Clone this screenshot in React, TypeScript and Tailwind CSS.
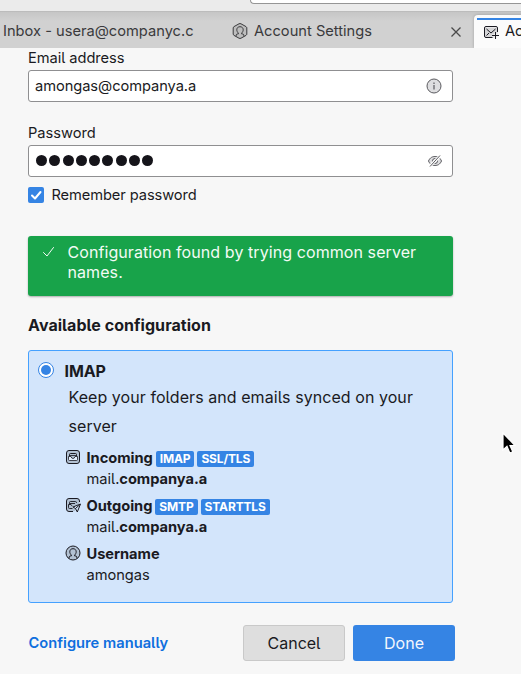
import React from "react";

function ProfileGlyph() {
  return (
    <g fill="none" stroke="currentColor" strokeWidth="1">
      <path d="M4.2 13.3v-1.1c0-.7.5-1.2 1.3-1.2h.8v-1C5.300 9 4.800 8 4.800 6.800 4.800 5 6 3.700 8 3.700s3.200 1.300 3.200 3.100c0 1.200-.5 2.200-1.500 3.200v1h.8c.8 0 1.300.5 1.300 1.200v1.100" />
    </g>
  );
}

function AccountIcon() {
  return (
    <svg width="16" height="16" viewBox="0 0 16 16" className="text-[#3a3a3c]">
      <path d="M7 .8Q8 .3 9 .8l5 2.800q.8.500.8 1.400v6q0 .9-.8 1.400l-5 2.800q-1 .5-2 0l-5-2.800q-.8-.5-.8-1.400V5q0-.9.800-1.400z" fill="#bdbdbd" stroke="currentColor" />
      <ProfileGlyph />
    </svg>
  );
}

function UserIcon() {
  return (
    <svg width="16" height="16" viewBox="0 0 16 16" className="text-[#1a1a22]">
      <circle cx="8" cy="8" r="7" fill="#b2c1d2" stroke="currentColor" />
      <ProfileGlyph />
    </svg>
  );
}

function NewMailIcon() {
  return (
    <svg width="16" height="16" viewBox="0 0 16 16" fill="none" stroke="#1a1a22">
      <rect x="1.500" y="3.500" width="13" height="10" rx="1.500" fill="#d5d5d7" stroke="none" />
      <path d="M9.500 13.500H3A1.500 1.500 0 0 1 1.500 12V4A1.500 1.500 0 0 1 3 2.500h10A1.500 1.500 0 0 1 14.500 4v4M3.500 5l4.500 4 4.500-4M3.500 11.500l2.500-2.500" />
      <path d="M12.500 8.500v7M9 11.500h7" stroke="#fbfbfb" strokeWidth="2" />
      <path d="M12.500 8v7M9 11.500h7" />
    </svg>
  );
}

function InboxIcon() {
  return (
    <svg width="16" height="16" viewBox="0 0 16 16" fill="none" stroke="#1a1a22">
      <rect x="1.500" y="1.500" width="13" height="13" rx="2.500" fill="#b2c1d2" />
      <path d="M4.500 7.500V5.500q0-1 1-1h5q1 0 1 1v2" />
      <path d="M5 6.500h6" strokeWidth=".8" />
      <path d="M3.500 7.500h2.500q.5 2 2 2t2-2h2.500v3q0 1-1 1h-7q-1 0-1-1z" fill="#e3effd" strokeWidth=".8" />
    </svg>
  );
}

function OutboxIcon() {
  return (
    <svg width="16" height="16" viewBox="0 0 16 16" fill="none" stroke="#1a1a22">
      <path d="M8 14.500H4A2.500 2.500 0 0 1 1.500 12V4A2.500 2.500 0 0 1 4 1.500h8A2.500 2.500 0 0 1 14.500 4v2L10 14z" fill="#b2c1d2" stroke="none" />
      <path d="M8 14.500H4A2.500 2.500 0 0 1 1.500 12V4A2.500 2.500 0 0 1 4 1.500h8A2.500 2.500 0 0 1 14.500 4v1" />
      <path d="M4.500 7.500v-2q0-1 1-1h5q1 0 1 1.500M5 6.500h5M7.500 11.500h-3q-1 0-1-1v-3H6q.3 1.200 1.500 1.700" strokeWidth=".9" />
      <path d="M15.500 7 8 10l2.500 1.500L12.300 15z" fill="#d3e5fb" />
      <path d="m15 7.500-4.500 4" />
    </svg>
  );
}

function Server({ icon, title, tags, children }: { icon: React.ReactNode; title: string; tags?: string[]; children: React.ReactNode }) {
  return (
    <div className="flex h-12 items-start tracking-[-0.05px]">
      <span className="mr-[5.500px] mt-[2px] size-4 shrink-0">{icon}</span>
      <div>
        <div className="flex h-[21px] items-center gap-[3px] font-bold">
          {title}
          {tags?.map((tag) => (
            <span key={tag} className="mt-[2px] h-4 rounded-[2px] bg-[#3584e4] px-1 text-[12px] leading-4 tracking-[-0.15px] text-white">{tag}</span>
          ))}
        </div>
        <div className="h-[21px] pt-px leading-[21px]">{children}</div>
      </div>
    </div>
  );
}

export default function App() {
  return (
    <div className="flex h-[674px] w-[521px] flex-col overflow-hidden bg-[#f7f7f7] font-['Inter',sans-serif] text-[14.67px] leading-[20px] text-[#1a1a22] [font-feature-settings:'cv05'] whitespace-nowrap">
      <div className="flex h-3 shrink-0 items-start justify-end border-b border-[#bcbcbc] bg-[#ebebeb]">
        <div className="h-1 w-[271px] rounded-bl-[4px] border-b border-l border-[#969696] bg-white" />
      </div>
      <div className="flex h-9 shrink-0 overflow-hidden bg-linear-to-b from-[#c6c6c6] to-[#d1d1d1] to-25% text-[#3a3a3c]">
        <div className="w-[232px] shrink-0 pl-[3px] pt-[9px]">Inbox - usera@companyc.c</div>
        <div className="flex w-[242px] shrink-0 pt-[9px]">
          <span className="mt-[2px] size-4"><AccountIcon /></span>
          <span className="ml-[6px]">Account Settings</span>
          <svg className="ml-auto mr-3 mt-[5px]" width="12" height="12" viewBox="0 0 12 12" stroke="#4a4a4a" strokeWidth="1.300"><path d="m1.500 1.500 9 9m0-9-9 9" /></svg>
        </div>
        <div className="mt-[3px] w-[60px] shrink-0 rounded-t-[4px] bg-[#fbfbfb] pl-[3px] pt-[3px] text-[#1a1a22] shadow-[0_0_3px_rgba(0,0,0,0.25)]">
          <div className="flex border-t-2 border-[#3584e4] pl-[6px] pt-px">
            <span className="mt-[3px] size-4 shrink-0"><NewMailIcon /></span>
            <span className="ml-[6px]">Ac</span>
          </div>
        </div>
      </div>

      <main className="ml-7 flex w-[427px] grow flex-col">
        <label className="h-[22px] tracking-[-0.05px]">Email address</label>
        <div className="flex h-8 w-[425px] items-center rounded-[3px] border border-[#8f8f91] bg-white pl-[6px] pr-[10px]">
          <span className="tracking-[-0.06px]">amongas@companya.a</span>
          <svg className="ml-auto" width="16" height="16" viewBox="0 0 16 16"><circle cx="8" cy="8" r="7" fill="#dedee0" stroke="#5b5b60" /><path d="M8 7v4.500M8 4.500V6" stroke="#5b5b60" strokeWidth="1.200" /></svg>
        </div>
        <label className="mt-[21px] h-[22px]">Password</label>
        <div className="flex h-8 w-[425px] items-center rounded-[3px] border border-[#8f8f91] bg-white pl-[7px] pr-[9.500px]">
          <div className="mb-px flex gap-[2.300px]">
            {Array.from({ length: 9 }, (_, i) => <span key={i} className="size-[11px] rounded-full bg-[#15141a]" />)}
          </div>
          <svg className="ml-auto" width="16" height="16" viewBox="0 0 16 16" fill="none" stroke="#5b5b60"><path d="M1.500 8C3 4.500 5.500 3.500 8 3.500S13 4.500 14.500 8C13 11.500 10.500 12.500 8 12.500S3 11.500 1.500 8z" fill="#dedee0" /><circle cx="8" cy="8" r="2.500" /><path d="M2.500 13.500l11-11" stroke="#fff" strokeWidth="3" /><path d="M3 13.500l10-11" /></svg>
        </div>
        <div className="mt-2 flex h-5 items-center">
          <span className="flex size-4 items-center justify-center rounded-[2px] bg-[#3584e4]"><svg width="16" height="16" viewBox="0 0 16 16" fill="none" stroke="white" strokeWidth="2" strokeLinecap="round" strokeLinejoin="round"><path d="m4 8.500 3 3L12.500 5" /></svg></span>
          <span className="ml-[7.500px] tracking-[-0.1px]">Remember password</span>
        </div>
        <div className="mt-[31px] flex h-[60px] w-[425px] rounded-[3px] bg-[#18a34a] pl-[13px] pt-[6px] text-[16px] tracking-[0.08px] text-[#f3fbf5] shadow-[0_1px_2px_rgba(0,0,0,0.3)]">
          <svg className="mt-[2px]" width="16" height="16" viewBox="0 0 16 16" fill="none" stroke="currentColor" strokeLinecap="round"><path d="M2.500 8.500l3.500 3.500 6.500-8.500" /></svg>
          <p className="ml-[10.500px]">Configuration found by trying common server<br />names.</p>
        </div>
        <h2 className="mt-[19px] h-5 text-[16px] font-bold tracking-[0.05px]">Available configuration</h2>
        <section className="mt-[15px] h-[253px] w-[425px] rounded-[3px] border border-[#45a1ff] bg-[#d3e5fb] pl-[9px]">
          <div className="flex h-8 pt-[10px] text-[16px] font-bold">
            <span className="mt-[1px] flex size-4 items-center justify-center rounded-full border border-[#3584e4] bg-white"><span className="size-[10px] rounded-full bg-[#3584e4]" /></span>
            <span className="ml-[10.500px] tracking-[-0.1px]">IMAP</span>
          </div>
          <p className="pl-[30.500px] text-[16px] leading-[29px] tracking-[0.06px]">Keep your folders and emails synced on your<br />server</p>
          <div className="mt-[6px] pl-[27px]">
            <Server icon={<InboxIcon />} title="Incoming" tags={["IMAP", "SSL/TLS"]}>mail.<b>companya.a</b></Server>
            <Server icon={<OutboxIcon />} title="Outgoing" tags={["SMTP", "STARTTLS"]}>mail.<b>companya.a</b></Server>
            <Server icon={<UserIcon />} title="Username">amongas</Server>
          </div>
        </section>
        <div className="mt-[22px] flex h-9 items-center">
          <span className="pl-[0.500px] font-semibold tracking-[0.02px] text-[#0f6fde]">Configure manually</span>
          <button className="ml-auto h-9 w-[102px] rounded-[3px] border border-[#c9c9c9] bg-[#dedede] text-[16px]">Cancel</button>
          <button className="ml-2 h-9 w-[102px] rounded-[3px] bg-[#3584e4] text-[16px] text-[#f3f7fd]">Done</button>
        </div>
      </main>
      <svg className="absolute left-[500px] top-[431px]" width="16" height="25" viewBox="0 0 16 25"><path d="M3 2v17l4-3.700 2.800 6.700 3-1.300-2.800-6.200h5z" fill="#000" stroke="#fff" strokeWidth="1.200" /></svg>
    </div>
  );
}
